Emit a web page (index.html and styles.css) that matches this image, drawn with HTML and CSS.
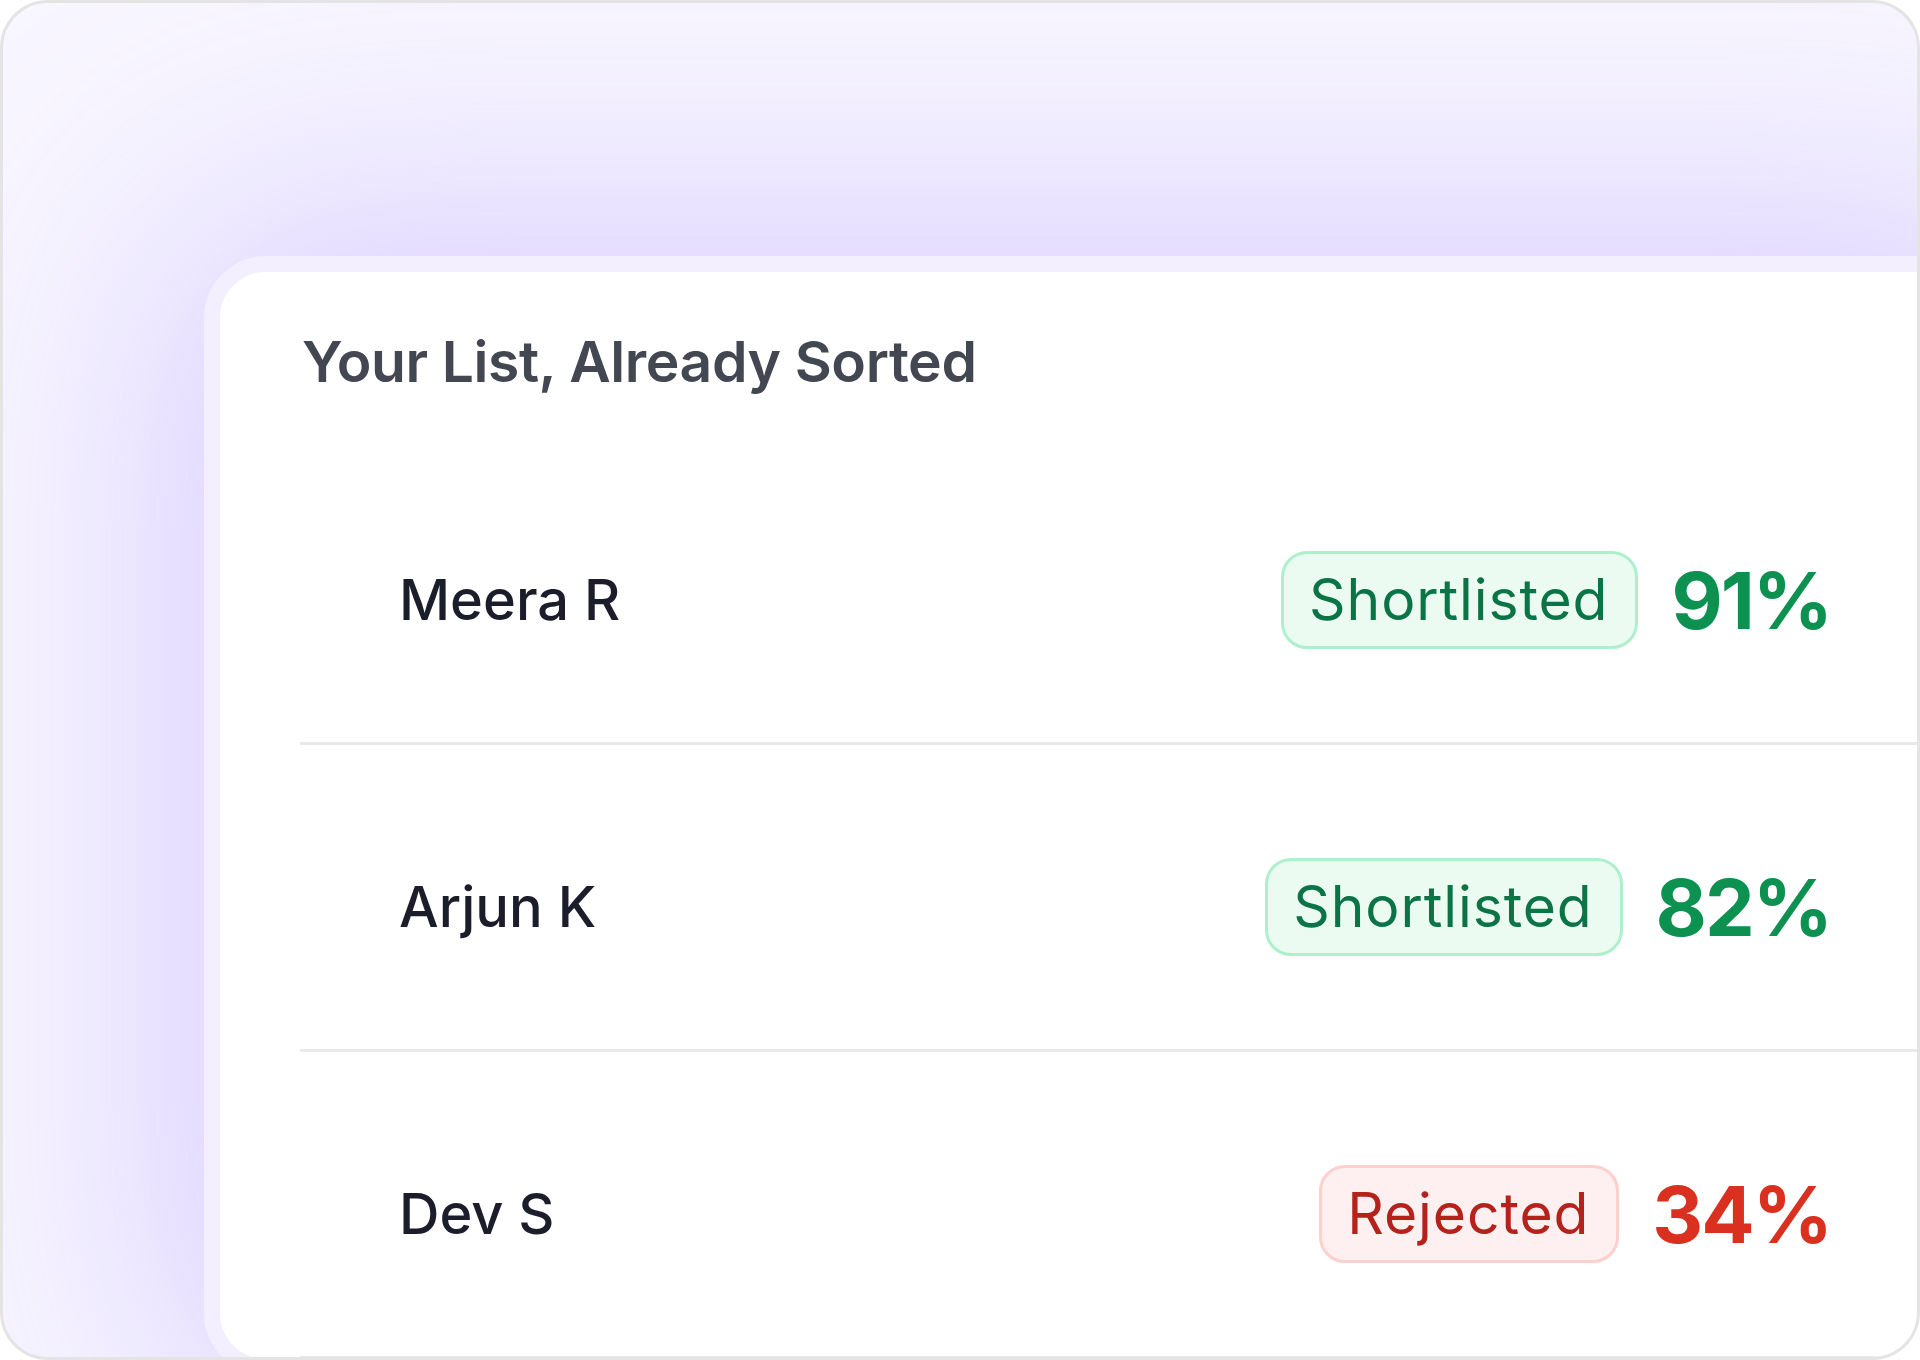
FILE: index.html
```html
<!DOCTYPE html>
<html lang="en">
<head>
<meta charset="utf-8">
<title>Your List, Already Sorted</title>
<link rel="stylesheet" href="styles.css">
</head>
<body>
<div class="frame">
  <section class="panel">
    <h2 class="panel-title">Your List, Already Sorted</h2>
    <ul class="list">
      <li class="row">
        <span class="name">Meera R</span>
        <span class="badge badge-ok">Shortlisted</span>
        <span class="score score-ok">91%</span>
      </li>
      <li class="row">
        <span class="name">Arjun K</span>
        <span class="badge badge-ok">Shortlisted</span>
        <span class="score score-ok">82%</span>
      </li>
      <li class="row">
        <span class="name">Dev S</span>
        <span class="badge badge-bad">Rejected</span>
        <span class="score score-bad">34%</span>
      </li>
    </ul>
  </section>
</div>
</body>
</html>
```

FILE: styles.css
```css
* { box-sizing: border-box; }

html, body {
  margin: 0;
  padding: 0;
  background: #ffffff;
}

body {
  font-family: Inter, "Noto Sans", "Liberation Sans", sans-serif;
}

.frame {
  width: 1920px;
  height: 1360px;
  border: 3px solid #e4e4e4;
  border-radius: 48px;
  overflow: hidden;
  background: #f8f6ff;
  padding: 253px 0 0 201px;
  display: flex;
  align-items: flex-start;
}

.panel {
  flex-shrink: 0;
  width: 1822px;
  border: 16px solid #f3efff;
  border-radius: 62px;
  background: #ffffff;
  padding: 55px 80px 0 80px;
  box-shadow: 0 0 320px 40px rgba(176, 150, 252, 0.42);
}

.panel-title {
  margin: 0 0 41px 0;
  padding-left: 2px;
  font-size: 57px;
  line-height: 70px;
  font-weight: 600;
  color: #434752;
  letter-spacing: -0.4px;
}

.list {
  list-style: none;
  margin: 0;
  padding: 0;
  width: 1630px;
}

.row {
  display: flex;
  align-items: center;
  padding: 113px 99px 93px 99px;
  border-bottom: 3px solid #e8e9e9;
}

.name {
  flex: 1;
  font-size: 56px;
  font-weight: 500;
  color: #1b1e2a;
  line-height: 1;
}

.badge {
  height: 98px;
  line-height: 92px;
  padding: 0 27px 0 25px;
  border: 3px solid;
  border-radius: 26px;
  font-size: 57px;
  font-weight: 400;
  letter-spacing: 0.9px;
}

.badge-ok {
  color: #0b7446;
  background: #ebfbf2;
  border-color: #aef0cb;
}

.badge-bad {
  color: #b3231c;
  background: #fef0f0;
  border-color: #fdcfcd;
}

.score {
  margin-left: 33px;
  font-size: 79px;
  font-weight: 700;
  line-height: 1;
  letter-spacing: -2px;
}

.score-ok { color: #0c9150; }
.score-bad { color: #d9301f; }
```
